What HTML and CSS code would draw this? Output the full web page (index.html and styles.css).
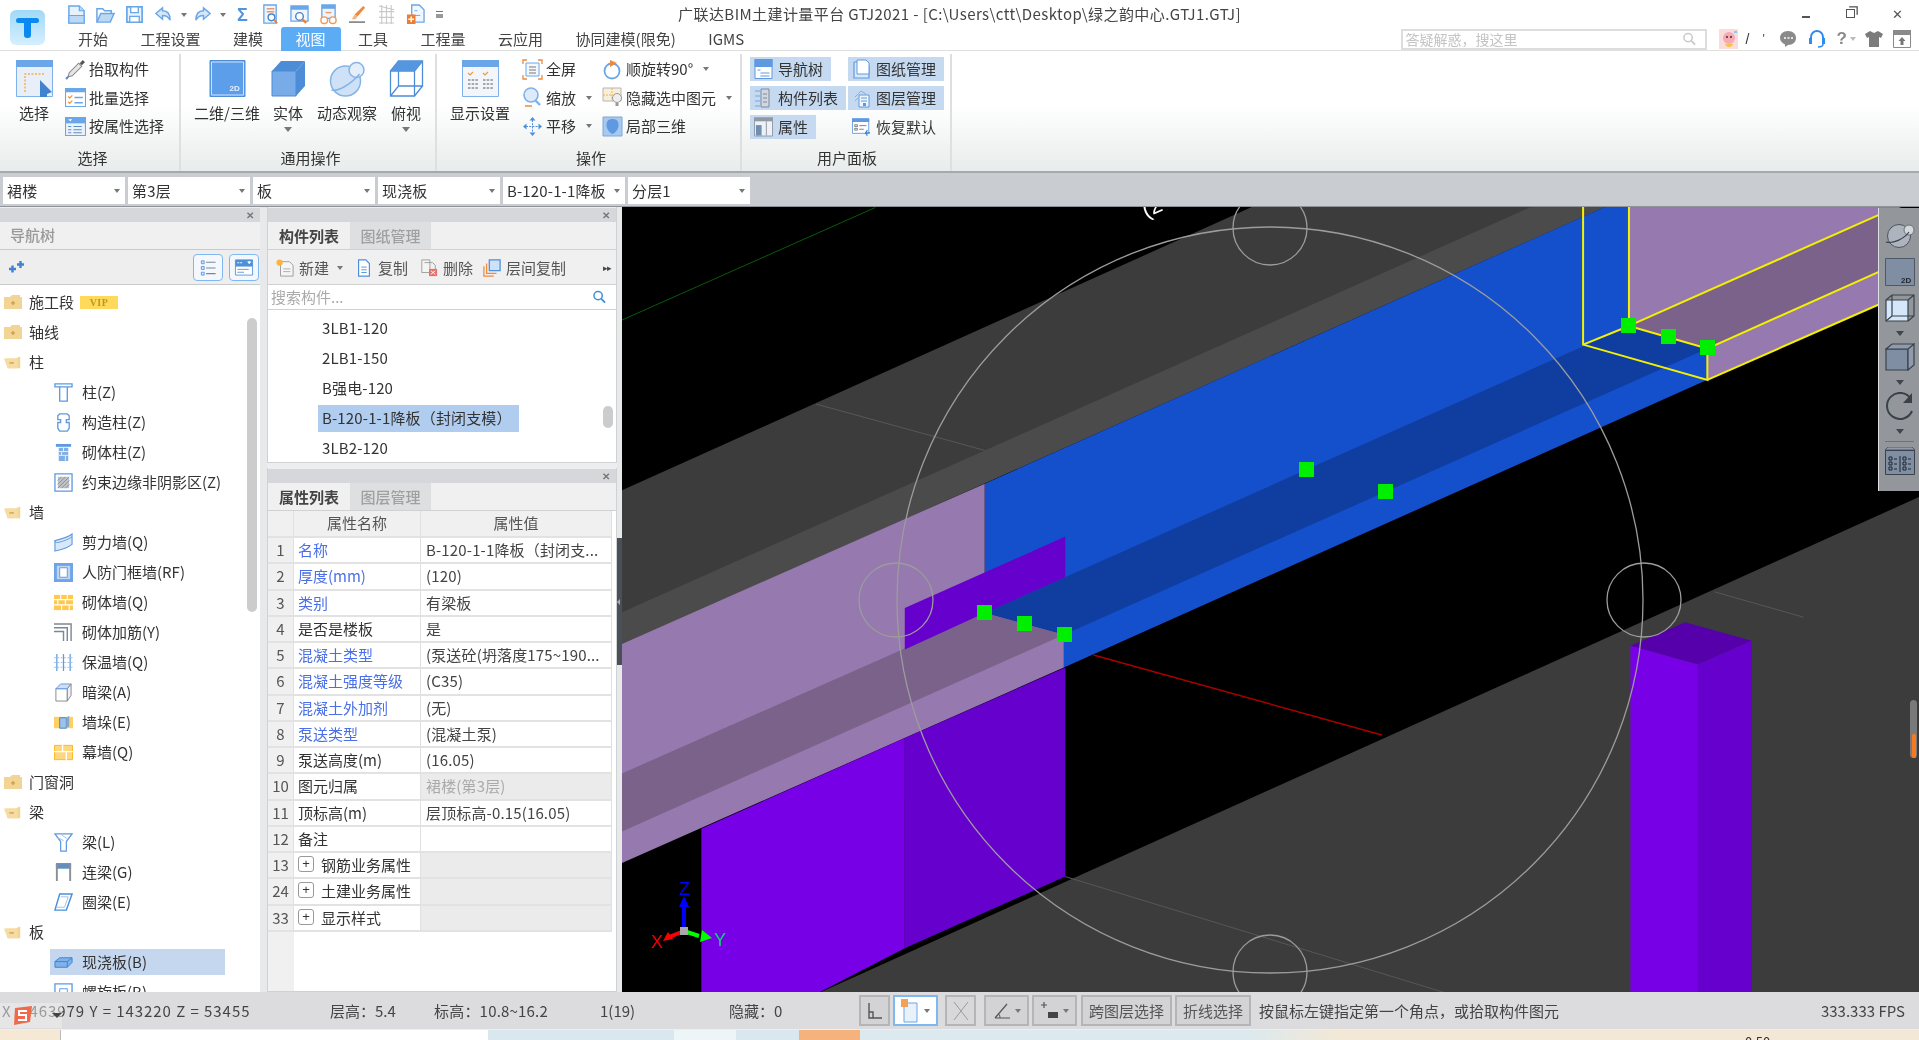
FILE: index.html
```html
<!DOCTYPE html>
<html lang="zh-CN">
<head>
<meta charset="utf-8">
<title>广联达BIM土建计量平台 GTJ2021</title>
<link rel="stylesheet" href="styles.css">
</head>
<body>
<svg class="defs" aria-hidden="true">
  <symbol id="q-doc" viewBox="0 0 20 20"><path d="M2 1h11l5 5v13H2z" fill="#e8f2fc" stroke="#6aa7e8" stroke-width="1.6"/><path d="M13 1v5h5M2 11h16v8H2z" fill="#bcd8f5" stroke="#6aa7e8" stroke-width="1.2"/></symbol>
  <symbol id="q-open" viewBox="0 0 20 20"><path d="M1 18V4h6l2 2h7v3" fill="none" stroke="#6aa7e8" stroke-width="1.6"/><path d="M1 18l4-9h14l-4 9z" fill="#bcd8f5" stroke="#6aa7e8" stroke-width="1.5"/></symbol>
  <symbol id="q-save" viewBox="0 0 20 20"><path d="M2 2h16v16H2z" fill="#e8f2fc" stroke="#6aa7e8" stroke-width="1.8"/><path d="M6 2h8v6H6zM5 12h10v6H5z" fill="#fff" stroke="#6aa7e8" stroke-width="1.4"/></symbol>
  <symbol id="q-undo" viewBox="0 0 20 20"><path d="M9 3L2 9l7 6v-4c4 0 6 1 8 5 0-7-3-10-8-10z" fill="#d5e7f9" stroke="#6aa7e8" stroke-width="1.5"/></symbol>
  <symbol id="q-redo" viewBox="0 0 20 20"><path d="M11 3l7 6-7 6v-4c-4 0-6 1-8 5 0-7 3-10 8-10z" fill="#d5e7f9" stroke="#6aa7e8" stroke-width="1.5"/></symbol>
  <symbol id="q-find1" viewBox="0 0 20 22"><path d="M3 1h13v19H3z" fill="#eef5fc" stroke="#6aa7e8" stroke-width="1.4"/><path d="M6 5h8M6 8h8" stroke="#e89a6a" stroke-width="1.6"/><circle cx="11" cy="14" r="3.5" fill="#fff" stroke="#4b84c4" stroke-width="1.5"/><path d="M14 17l3 3" stroke="#ef7d31" stroke-width="2"/></symbol>
  <symbol id="q-find2" viewBox="0 0 20 22"><path d="M1 2h18v16H1z" fill="#eef5fc" stroke="#6aa7e8" stroke-width="1.4"/><path d="M1 2h18v4H1z" fill="#6aa7e8"/><circle cx="10" cy="13" r="4" fill="#fff" stroke="#4b84c4" stroke-width="1.5"/><path d="M13 16l4 4" stroke="#ef7d31" stroke-width="2.2"/></symbol>
  <symbol id="q-glass" viewBox="0 0 20 22"><path d="M3 1h14v14H3z" fill="#eef5fc" stroke="#6aa7e8" stroke-width="1.4"/><path d="M3 1h14v4H3z" fill="#6aa7e8"/><path d="M7 9h6" stroke="#e89a6a" stroke-width="1.5"/><circle cx="5.5" cy="17" r="3.5" fill="#fff" stroke="#ef9a5c" stroke-width="1.5"/><circle cx="14.5" cy="17" r="3.5" fill="#fff" stroke="#ef9a5c" stroke-width="1.5"/></symbol>
  <symbol id="q-brush" viewBox="0 0 20 22"><path d="M16 2l2 2-8 9-3-2z" fill="#ef8a3c"/><path d="M7 11l3 2-2 3-4 0z" fill="#f4b27c"/><path d="M1 19h17" stroke="#777" stroke-width="1.6"/></symbol>
  <symbol id="q-grid" viewBox="0 0 20 22"><path d="M2 2l16 4M2 8h16M2 14h16M2 20h16M5 1v20M10 1v20M15 1v20" stroke="#c9c9c9" stroke-width="1.2" fill="none"/></symbol>
  <symbol id="q-plus" viewBox="0 0 20 22"><path d="M6 1h8l5 5v13H6z" fill="#f2f7fd" stroke="#6aa7e8" stroke-width="1.4"/><path d="M9 7h3M9 12h6" stroke="#6aa7e8"/><path d="M1 11h9v10H1z" fill="#ef7d31"/><path d="M5.5 13v6M2.5 16h6" stroke="#fff" stroke-width="1.6"/></symbol>

  <symbol id="r-select" viewBox="0 0 37 37"><path d="M.5.5h36v36H.5z" fill="#e9eff8" stroke="#7fb2ea"/><path d="M0 0h37v7H0z" fill="#6aa6e8"/><path d="M9 32V14h20" fill="none" stroke="#efb14f" stroke-width="1.4" stroke-dasharray="2 1.5"/><path d="M24 20l12 12-5 2v3H24z" fill="#3f82cf"/></symbol>
  <symbol id="r-pick" viewBox="0 0 20 20"><path d="M17 1l2 2-3 3-2-2z" fill="#555"/><path d="M13 4l3 3-9 9-4 1 1-4z" fill="#e6e6e6" stroke="#888"/><path d="M3 17l-2 2" stroke="#4b90d8" stroke-width="2"/></symbol>
  <symbol id="r-batch" viewBox="0 0 20 20"><path d="M.5 1.5h19v17H.5z" fill="#fff" stroke="#6aa7e8"/><path d="M0 1h20v4H0z" fill="#6aa7e8"/><path d="M3 9l1.5 1.5L7 8M3 14l1.5 1.5L7 13" fill="none" stroke="#ef9a3c" stroke-width="1.2"/><path d="M9 10h8M9 15h8" stroke="#6aa7e8" stroke-width="1.2"/></symbol>
  <symbol id="r-attr" viewBox="0 0 20 20"><path d="M.5 1.5h19v17H.5z" fill="#eaf2fb" stroke="#6aa7e8"/><path d="M0 1h20v6H0z" fill="#6aa7e8"/><path d="M3 3h4L5 5z" fill="#fff"/><path d="M8 10h8M8 13h8M8 16h8M3 10h3M3 13h3M3 16h3" stroke="#5f8fc4"/></symbol>
  <symbol id="r-solid" viewBox="0 0 35 37"><path d="M1 11h24v25H1z" fill="#78ace9" stroke="#4d8cd6"/><path d="M1 11l9-10h24l-9 10z" fill="#4d8cd6"/><path d="M25 11l9-10v25l-9 10z" fill="#4d8cd6"/></symbol>
  <symbol id="r-orbit" viewBox="0 0 36 37"><circle cx="16" cy="21" r="15" fill="#cfe1f6" stroke="#87b4e6" stroke-width="1.5"/><circle cx="27" cy="10" r="7.5" fill="#e4effb" stroke="#87b4e6" stroke-width="1.5"/><path d="M2 30C8 32 22 24 30 14" fill="none" stroke="#87b4e6" stroke-width="1.5"/></symbol>
  <symbol id="r-top" viewBox="0 0 34 37"><path d="M1 11h24v25H1zM9 1h24v25H9zM1 11l8-10M25 11l8-10M25 36l8-10M1 36l8-10" fill="none" stroke="#4d8cd6" stroke-width="1.3"/><path d="M1 11l8-10h24l-8 10z" fill="#5596e0"/></symbol>
  <symbol id="r-disp" viewBox="0 0 37 37"><path d="M.5.5h36v36H.5z" fill="#f2f6fb" stroke="#7fb2ea"/><path d="M0 0h37v7H0z" fill="#6aa6e8"/><path d="M6 13l2 2 3-3M21 13l2 2 3-3" fill="none" stroke="#ef9a3c" stroke-width="1.2"/><path d="M6 20h11M6 24h11M6 28h11M21 20h11M21 24h11M21 28h11" stroke="#8a8f96" stroke-width="1.4" stroke-dasharray="2.5 1.2"/></symbol>
  <symbol id="r-full" viewBox="0 0 21 21"><path d="M4 4h13v13H4z" fill="#f4f8fd" stroke="#6aa7e8"/><path d="M7 8h7M7 11h7M7 14h7" stroke="#777"/><path d="M1 5V1h4M16 1h4v4M20 16v4h-4M5 20H1v-4" fill="none" stroke="#ef8a3c" stroke-width="1.3"/></symbol>
  <symbol id="r-rot" viewBox="0 0 21 21"><circle cx="10" cy="12" r="7.5" fill="none" stroke="#6aa7e8" stroke-width="1.8"/><path d="M8 1l7 3-7 4z" fill="#ef8a3c"/></symbol>
  <symbol id="r-zoom" viewBox="0 0 21 21"><circle cx="9" cy="8" r="7" fill="#ddeafa" stroke="#7fb2ea" stroke-width="1.6"/><path d="M13 13l5 5" stroke="#7fb2ea" stroke-width="2.4"/><path d="M3 19h7" stroke="#ef7d31" stroke-width="1.4"/></symbol>
  <symbol id="r-hide" viewBox="0 0 21 21"><path d="M1 1h18v13H1z" fill="#f7efd9" stroke="#b6b6b6"/><path d="M10 1v13M1 8h9" stroke="#efb14f" stroke-dasharray="2 1"/><circle cx="15" cy="11" r="4.5" fill="#eee" stroke="#999"/><path d="M13.5 16h3v3h-3z" fill="#999"/></symbol>
  <symbol id="r-pan" viewBox="0 0 21 21"><path d="M10.5 1l3 3.5h-6zM10.5 20l3-3.5h-6zM1 10.5l3.5-3v6zM20 10.5l-3.5-3v6z" fill="#4b90d8"/><path d="M10.5 4v13M4 10.5h13" stroke="#4b90d8" stroke-width="1" stroke-dasharray="2 1.2"/></symbol>
  <symbol id="r-local" viewBox="0 0 21 21"><path d="M1 1h19v19H1z" fill="#a7c9ef" stroke="#7fa8d6"/><path d="M10.5 3c4 0 6 2 6 6s-3 8-6 9c-3-1-6-5-6-9s2-6 6-6z" fill="#5f9ae0"/></symbol>
  <symbol id="r-nav" viewBox="0 0 18 20"><path d="M.5.5h17v19H.5z" fill="#fff" stroke="#5f9ae0"/><path d="M0 0h18v8H0z" fill="#5f9ae0"/><path d="M3 11h3M6 14h9M6 17h9" stroke="#5f9ae0"/></symbol>
  <symbol id="r-draw" viewBox="0 0 19 20"><path d="M2 3h3M2 3v16h15V7L13 3h-3" fill="#d9e8f8" stroke="#5f9ae0" stroke-width="1.2"/><path d="M5 1h9l3 3v11H5z" fill="#fff" stroke="#5f9ae0"/></symbol>
  <symbol id="r-list" viewBox="0 0 19 20"><path d="M7 1h8v18H7z" fill="#cfd7e2" stroke="#7f8894"/><path d="M9 6h4M9 10h4M9 14h4" stroke="#7f8894"/><path d="M1 3h5M1 8h5M1 13h5M1 18h5" stroke="#6aa7e8"/></symbol>
  <symbol id="r-layer" viewBox="0 0 19 20"><path d="M3 9l6-6 5 3M3 13l3-3" fill="none" stroke="#aaa"/><path d="M7 7h10v12H7z" fill="#eef5fc" stroke="#5f9ae0"/><path d="M9 10h6M9 13h6" stroke="#5f9ae0"/><path d="M11 15h3v3h-3z" fill="#5f9ae0"/></symbol>
  <symbol id="r-prop" viewBox="0 0 20 20"><path d="M.5.5h19v19H.5z" fill="#eef1f5" stroke="#8f98a3"/><path d="M0 0h20v4H0z" fill="#8f98a3"/><path d="M2 8h6v11H2z" fill="#6f8eb0"/><path d="M13 4v15" stroke="#8f98a3"/></symbol>
  <symbol id="r-rest" viewBox="0 0 21 21"><path d="M.5 1.5h18v16H.5z" fill="#fff" stroke="#5f9ae0"/><path d="M0 1h19v4H0z" fill="#5f9ae0"/><path d="M3 8h3v2H3zM3 12h3v2H3z" fill="none" stroke="#777"/><path d="M8 9h8M8 13h5" stroke="#777"/><path d="M20 17h-5l2-3M15 17l2 3" fill="none" stroke="#3f82cf" stroke-width="1.3"/></symbol>

  <symbol id="f-plus" viewBox="0 0 18 16"><path d="M0 3h6l2-2h8v2h2v12H0z" fill="#f2d594"/><path d="M7 9h4M9 7v4" stroke="#cfa552" stroke-width="1.6"/></symbol>
  <symbol id="f-minus" viewBox="0 0 20 16"><path d="M2 4h11l5-2v13H4z" fill="#f2d594"/><path d="M0 4h13l5-2-3 3v10H4z" fill="#f5dca4"/><path d="M6 9h5" stroke="#cfa552" stroke-width="1.6"/></symbol>
  <symbol id="t-col" viewBox="0 0 20 20"><path d="M1 1h18v3H1zM6 4h8v15H6z" fill="#fff" stroke="#5f9ae0" stroke-width="1.4"/></symbol>
  <symbol id="t-struct" viewBox="0 0 20 20"><path d="M6 1h8l2 2v4h-3v3h3v6l-2 3H6l-2-3v-6h3V7H4V3z" fill="#fff" stroke="#5f9ae0" stroke-width="1.4"/></symbol>
  <symbol id="t-brick" viewBox="0 0 20 20"><path d="M2 1h16v3H2z" fill="#5f9ae0"/><path d="M5 5h10v14H5z" fill="#7faee6"/><path d="M5 9h10M5 13h10M10 5v4M8 9v4M12 13v6" stroke="#e9f1fb"/></symbol>
  <symbol id="t-limit" viewBox="0 0 20 20"><path d="M1 1h18v18H1z" fill="#fff" stroke="#5f9ae0" stroke-width="1.4"/><path d="M4 4h12v12H4z" fill="#bfc3c8"/><path d="M4 8l4-4M4 12l8-8M4 16l12-12M8 16l8-8M12 16l4-4" stroke="#8a8f96"/></symbol>
  <symbol id="t-shear" viewBox="0 0 20 20"><path d="M1 8C5 7 14 5 19 1v11c-5 4-13 6-18 7z" fill="#d9e8f8" stroke="#5f9ae0" stroke-width="1.2"/><path d="M1 8c0 2 1 2 3 2 5-1 11-3 15-6" fill="none" stroke="#5f9ae0"/></symbol>
  <symbol id="t-rf" viewBox="0 0 20 20"><path d="M0 0h20v20H0z" fill="#6fa4e6"/><path d="M3 3h14v14H3z" fill="#bcd6f3"/><path d="M6 5h8v10H6z" fill="#fff" stroke="#5f9ae0"/></symbol>
  <symbol id="t-wall" viewBox="0 0 20 16"><path d="M0 0h20v16H0z" fill="#ffc94f"/><path d="M0 5h20M0 10.500h20M7 0v5M14 0v5M4 5v5M12 5v5M8 10v6M16 10v6" stroke="#fff" stroke-width="1.2"/></symbol>
  <symbol id="t-rebar" viewBox="0 0 20 20"><path d="M0 1h18v18M0 5h14v14M0 9h10v10" fill="none" stroke="#7d8894" stroke-width="1.5"/></symbol>
  <symbol id="t-insul" viewBox="0 0 20 20"><path d="M3 1v18M10 1v18M17 1v18" stroke="#5f9ae0" stroke-width="1.3"/><path d="M0 5h20M0 10h20M0 15h20" stroke="#9cc1ec" stroke-width="1" stroke-dasharray="2 1.5"/></symbol>
  <symbol id="t-hid" viewBox="0 0 20 20"><path d="M2 6h12v13H2z" fill="#fff" stroke="#888"/><path d="M2 6l5-5h11l-4 5z" fill="#cfe0f5" stroke="#5f9ae0"/><path d="M14 6l4-5v12l-4 6z" fill="#eef" stroke="#888"/></symbol>
  <symbol id="t-pier" viewBox="0 0 20 16"><path d="M0 2h20v12H0z" fill="#ffcf60"/><path d="M6 3h7v11H6z" fill="#9cc1ec" stroke="#4b84c4"/><path d="M13 3l3-2v11l-3 2z" fill="#7fa8d6"/></symbol>
  <symbol id="t-curtain" viewBox="0 0 20 16"><path d="M.5.5h19v15H.5z" fill="#ffd77f" stroke="#ffb71c"/><path d="M0 7h20M9 0v7M13 7v9" stroke="#fff" stroke-width="1.4"/></symbol>
  <symbol id="t-beam" viewBox="0 0 20 20"><path d="M1 1h18l-6 8v10H7V9z" fill="#fff" stroke="#5f9ae0" stroke-width="1.3"/><path d="M4 5l6 3M8 2l6 4" stroke="#9cc1ec"/></symbol>
  <symbol id="t-lintel" viewBox="0 0 20 20"><path d="M2 1h16v5H2z" fill="#5f8fc4"/><path d="M2 1h2v18H2zM16 1h2v18h-2z" fill="#8a8f96"/><path d="M2 0h16v1.500H2z" fill="#8a8f96"/></symbol>
  <symbol id="t-ring" viewBox="0 0 20 20"><path d="M6 1h13l-6 17H1z" fill="#fff" stroke="#4b90d8" stroke-width="1.5"/><path d="M7 4h8l-4 11H3" fill="none" stroke="#9cc1ec"/></symbol>
  <symbol id="t-slab" viewBox="0 0 20 12"><path d="M1 5l5-4h13v5l-5 5H1z" fill="#7fb2ea" stroke="#3f82cf"/><path d="M1 5h13l5-4M14 5v6" fill="none" stroke="#3f82cf"/></symbol>
  <symbol id="t-spiral" viewBox="0 0 20 20"><path d="M1 1h18v18H1z" fill="#fff" stroke="#5f9ae0" stroke-width="1.4"/><path d="M6 6h8v8H6z" fill="none" stroke="#5f9ae0"/></symbol>

  <symbol id="p-new" viewBox="0 0 20 20"><path d="M5 3h10l4 4v12H5z" fill="#f5f5f5" stroke="#999"/><path d="M8 11h8M8 14h8" stroke="#aaa"/><circle cx="4" cy="4" r="3.500" fill="#ffb13b"/></symbol>
  <symbol id="p-copy" viewBox="0 0 20 20"><path d="M4 1h8l4 4v14H4z" fill="#fff" stroke="#4b90d8" stroke-width="1.3"/><path d="M7 9h6M7 12h6M7 15h6" stroke="#4b90d8"/></symbol>
  <symbol id="p-del" viewBox="0 0 20 20"><path d="M2 1h9v14H2z" fill="#f4f4f4" stroke="#999"/><path d="M5 4h9l3 3v5" fill="none" stroke="#999"/><path d="M10 11h9v8h-9z" fill="#e8706a"/><path d="M12 13l5 4M17 13l-5 4" stroke="#fff"/></symbol>
  <symbol id="p-floor" viewBox="0 0 20 20"><path d="M1 8v11h11M4 5v11h11" fill="none" stroke="#ef8a3c" stroke-width="1.4"/><path d="M7 1h12v12H7z" fill="#cfe0f7" stroke="#4b90d8" stroke-width="1.4"/></symbol>
  <symbol id="s-mag" viewBox="0 0 14 14"><circle cx="5.500" cy="5.500" r="4.500" fill="none" stroke="currentColor" stroke-width="1.6"/><path d="M9 9l4 4" stroke="currentColor" stroke-width="2"/></symbol>

  <symbol id="b-angle" viewBox="0 0 20 20"><path d="M4 2v15h13M4 11h4v6" fill="none" stroke="#555" stroke-width="1.4"/></symbol>
  <symbol id="b-rect" viewBox="0 0 20 24"><path d="M3 4h13v19H3z" fill="#e9f2fb" stroke="#6aa7e8"/><path d="M0 0h7v8H0z" fill="#f5a05a"/></symbol>
  <symbol id="b-x" viewBox="0 0 20 20"><path d="M3 1l14 18M17 1L3 19" stroke="#9a9a9a"/></symbol>
  <symbol id="b-ang" viewBox="0 0 20 20"><path d="M3 17h15M3 17L15 3" stroke="#555" stroke-width="1.2"/><path d="M8 17c0-3-1-4-2-4" stroke="#555" fill="none"/></symbol>
  <symbol id="b-plus" viewBox="0 0 20 20"><path d="M1 4h6M4 1v6" stroke="#555" stroke-width="1.2"/><path d="M8 11h10v6H8z" fill="#444"/></symbol>

  <symbol id="v-orbit" viewBox="0 0 30 26"><circle cx="14" cy="14" r="11.500" fill="#aeb4bd" stroke="#4b535d"/><circle cx="24" cy="8" r="5" fill="#d4d8dd" stroke="#6a727c"/><path d="M1 20c7 2 18-3 23-10" fill="none" stroke="#39414b" stroke-width="1.2"/></symbol>
  <symbol id="v-wire" viewBox="0 0 30 28"><path d="M1 6h22v21H1z" fill="#d5e8fb" stroke="#39414b" stroke-width="1.2"/><path d="M1 6l6-5h22v21l-6 5M23 6l6-5M7 1v21h22M1 27l6-5" fill="none" stroke="#39414b" stroke-width="1.2"/></symbol>
  <symbol id="v-cube" viewBox="0 0 30 28"><path d="M1 6h22v21H1z" fill="#7f8ea3" stroke="#39414b" stroke-width="1.2"/><path d="M1 6l6-5h22l-6 5zM23 6l6-5v21l-6 5z" fill="#8f9bac" stroke="#39414b" stroke-width="1.2"/></symbol>
  <symbol id="v-rot" viewBox="0 0 30 28"><path d="M26 7a13 13 0 1 0 1 12" fill="none" stroke="#39414b" stroke-width="2"/><path d="M27 1v10H18z" fill="#39414b"/></symbol>
  <symbol id="v-table" viewBox="0 0 30 28"><path d="M.5 3.500h29v24H.5z" fill="#7f8ea3" stroke="#39414b"/><path d="M0 3l3-3h24l3 3z" fill="#8f9bac" stroke="#39414b" stroke-width=".7"/><path d="M15 9v16M4 10h3v3H4zM4 15h3v3H4zM4 20h3v3H4zM18 10h3v3h-3zM18 15h3v3h-3zM18 20h3v3h-3zM9 12h3M9 17h3M9 22h3M23 12h3M23 17h3M23 22h3" fill="none" stroke="#20262e"/></symbol>
</svg>

<div class="app">
  <header class="top">
    <div class="logo"><span class="logo-t"></span></div>
    <div class="title-row">
      <div class="qat">
        <svg class="qi"><use href="#q-doc"/></svg>
        <svg class="qi"><use href="#q-open"/></svg>
        <svg class="qi"><use href="#q-save"/></svg>
        <svg class="qi"><use href="#q-undo"/></svg><span class="tri q-tri"></span>
        <svg class="qi"><use href="#q-redo"/></svg><span class="tri q-tri"></span>
        <span class="sigma">Σ</span>
        <svg class="qi"><use href="#q-find1"/></svg>
        <svg class="qi"><use href="#q-find2"/></svg>
        <svg class="qi"><use href="#q-glass"/></svg>
        <svg class="qi"><use href="#q-brush"/></svg>
        <svg class="qi"><use href="#q-grid"/></svg>
        <svg class="qi"><use href="#q-plus"/></svg>
        <span class="q-more"></span>
      </div>
      <div class="title">广联达BIM土建计量平台 GTJ2021 - [C:\Users\ctt\Desktop\绿之韵中心.GTJ1.GTJ]</div>
      <div class="win">
        <span class="win-min"></span>
        <span class="win-rest"></span>
        <span class="win-close">✕</span>
      </div>
    </div>
    <div class="tab-row">
      <nav class="tabs">
        <span class="tab">开始</span><span class="tab">工程设置</span><span class="tab">建模</span><span class="tab active">视图</span><span class="tab">工具</span><span class="tab">工程量</span><span class="tab">云应用</span><span class="tab">协同建模(限免)</span><span class="tab">IGMS</span>
      </nav>
      <div class="tools">
        <div class="search"><span>答疑解惑，搜这里</span><svg class="search-ic"><use href="#s-mag"/></svg></div>
        <svg class="avatar" viewBox="0 0 19 20"><path d="M0 0h19v20H0z" fill="#fbdcdc"/><circle cx="10" cy="9" r="6" fill="#f7a9b4"/><path d="M6 15c1 4 7 4 8 0z" fill="#f3c445"/><circle cx="8" cy="8" r="1" fill="#333"/><circle cx="12" cy="8" r="1" fill="#333"/><path d="M15 2h3v2h-3z" fill="#8fc5ef"/></svg>
        <span class="slash">/</span>
        <span class="tick">'</span>
        <svg class="tool-ic chat" viewBox="0 0 18 18"><path d="M9 1c5 0 8 3 8 7s-3 7-8 7l-3 2v-2.500C3 13 1 11 1 8c0-4 3-7 8-7z" fill="#8a8a8a"/><path d="M5 8h2M8.500 8h2M12 8h2" stroke="#fff" stroke-width="1.400"/></svg>
        <svg class="tool-ic head" viewBox="0 0 18 20"><path d="M3 11V8a6 6 0 0 1 12 0v3" fill="none" stroke="#2f8bf0" stroke-width="2"/><path d="M1 9h3v6H1zM14 9h3v6h-3z" fill="#2f8bf0"/><path d="M15 15c0 2-2 3-5 3" fill="none" stroke="#2f8bf0" stroke-width="1.500"/></svg>
        <span class="help">?</span><span class="tri help-tri"></span>
        <svg class="tool-ic shirt" viewBox="0 0 18 18"><path d="M5 1l4 2 4-2 5 3-2 4-2-1v10H4V7L2 8 0 4z" fill="#7b7b7b"/></svg>
        <svg class="tool-ic box" viewBox="0 0 18 18"><path d="M.5.5h17v17H.5z" fill="#fff" stroke="#8a8a8a"/><path d="M0 0h18v5H0z" fill="#8a8a8a"/><path d="M9 7l3.500 4H10.500v4h-3v-4H5.500z" fill="#777"/></svg>
      </div>
    </div>
  </header>

  <section class="ribbon">
    <div class="group g-sel">
      <div class="g-body">
        <div class="big b-sel"><svg class="big-ic"><use href="#r-select"/></svg><span>选择</span></div>
        <div class="col">
          <div class="sm"><svg class="sm-ic"><use href="#r-pick"/></svg><span>抬取构件</span></div>
          <div class="sm"><svg class="sm-ic"><use href="#r-batch"/></svg><span>批量选择</span></div>
          <div class="sm"><svg class="sm-ic"><use href="#r-attr"/></svg><span>按属性选择</span></div>
        </div>
      </div>
      <div class="g-label">选择</div>
    </div>
    <div class="group g-common">
      <div class="g-body">
        <div class="big b-2d"><svg class="big-ic" viewBox="0 0 36 37"><path d="M.5.5h35v36H.5z" fill="#5fa0ea" stroke="#4d8cd6"/><path d="M2 2h32v33H2z" fill="#5c9eea" stroke="#cfe2f7"/><text class="sym-2d" x="20" y="31">2D</text></svg><span>二维/三维</span></div>
        <div class="big b-solid"><svg class="big-ic"><use href="#r-solid"/></svg><span>实体</span><i class="tri big-tri"></i></div>
        <div class="big b-orbit"><svg class="big-ic"><use href="#r-orbit"/></svg><span>动态观察</span></div>
        <div class="big b-solid"><svg class="big-ic"><use href="#r-top"/></svg><span>俯视</span><i class="tri big-tri"></i></div>
      </div>
      <div class="g-label">通用操作</div>
    </div>
    <div class="group g-ops">
      <div class="g-body">
        <div class="big b-2d"><svg class="big-ic"><use href="#r-disp"/></svg><span>显示设置</span></div>
        <div class="col col-a">
          <div class="sm"><svg class="sm-ic"><use href="#r-full"/></svg><span>全屏</span></div>
          <div class="sm"><svg class="sm-ic"><use href="#r-zoom"/></svg><span>缩放</span><i class="tri"></i></div>
          <div class="sm"><svg class="sm-ic"><use href="#r-pan"/></svg><span>平移</span><i class="tri"></i></div>
        </div>
        <div class="col">
          <div class="sm"><svg class="sm-ic"><use href="#r-rot"/></svg><span>顺旋转90°</span><i class="tri"></i></div>
          <div class="sm"><svg class="sm-ic"><use href="#r-hide"/></svg><span>隐藏选中图元</span><i class="tri"></i></div>
          <div class="sm"><svg class="sm-ic"><use href="#r-local"/></svg><span>局部三维</span></div>
        </div>
      </div>
      <div class="g-label">操作</div>
    </div>
    <div class="group g-user">
      <div class="user-grid">
        <div class="pill on"><svg class="pill-ic"><use href="#r-nav"/></svg><span>导航树</span></div>
        <div class="pill on"><svg class="pill-ic"><use href="#r-draw"/></svg><span>图纸管理</span></div>
        <div class="pill on"><svg class="pill-ic"><use href="#r-list"/></svg><span>构件列表</span></div>
        <div class="pill on"><svg class="pill-ic"><use href="#r-layer"/></svg><span>图层管理</span></div>
        <div class="pill on"><svg class="pill-ic"><use href="#r-prop"/></svg><span>属性</span></div>
        <div class="pill"><svg class="pill-ic"><use href="#r-rest"/></svg><span>恢复默认</span></div>
      </div>
      <div class="g-label">用户面板</div>
    </div>
  </section>

  <section class="combos">
    <div class="combo"><span>裙楼</span><i class="tri"></i></div>
    <div class="combo"><span>第3层</span><i class="tri"></i></div>
    <div class="combo"><span>板</span><i class="tri"></i></div>
    <div class="combo"><span>现浇板</span><i class="tri"></i></div>
    <div class="combo"><span>B-120-1-1降板</span><i class="tri"></i></div>
    <div class="combo"><span>分层1</span><i class="tri"></i></div>
  </section>

  <main class="main">
    <aside class="nav">
      <div class="dock-head"><span class="dock-x">✕</span></div>
      <div class="nav-title">导航树</div>
      <div class="nav-tools">
        <svg class="nav-add" viewBox="0 0 16 12"><path d="M0 8h7M3.500 4.500v7M8 3.500h7M11.500 0v7" stroke="#3f82cf" stroke-width="2.400"/></svg>
        <span class="nav-btn"><svg viewBox="0 0 20 20"><path d="M3 3h3v3H3zM3 9h3v3H3zM3 15h3v3H3z" fill="#d9e8f8" stroke="#5f9ae0"/><path d="M8 4.500h10M8 10.500h10M8 16.500h10" stroke="#7b8794" stroke-width="1.200"/></svg></span>
        <span class="nav-btn"><svg viewBox="0 0 20 20"><path d="M1 2h18v16H1z" fill="#fff" stroke="#5f9ae0"/><path d="M1 2h18v7H1z" fill="#4b90d8"/><path d="M3 5h2M6 5h2M14 4h3l-1.500 2z" stroke="#fff" fill="#fff"/><path d="M3 12h12M3 15h7" stroke="#5f9ae0"/></svg></span>
      </div>
      <div class="tree">
        <div class="scroll nav-scroll"></div>
        <div class="f"><svg class="f-ic"><use href="#f-plus"/></svg><span>施工段</span><span class="vip">VIP</span></div>
        <div class="f"><svg class="f-ic"><use href="#f-plus"/></svg><span>轴线</span></div>
        <div class="f"><svg class="f-ic"><use href="#f-minus"/></svg><span>柱</span></div>
        <div class="c"><svg class="c-ic"><use href="#t-col"/></svg><span>柱(Z)</span></div>
        <div class="c"><svg class="c-ic"><use href="#t-struct"/></svg><span>构造柱(Z)</span></div>
        <div class="c"><svg class="c-ic"><use href="#t-brick"/></svg><span>砌体柱(Z)</span></div>
        <div class="c"><svg class="c-ic"><use href="#t-limit"/></svg><span>约束边缘非阴影区(Z)</span></div>
        <div class="f"><svg class="f-ic"><use href="#f-minus"/></svg><span>墙</span></div>
        <div class="c"><svg class="c-ic"><use href="#t-shear"/></svg><span>剪力墙(Q)</span></div>
        <div class="c"><svg class="c-ic"><use href="#t-rf"/></svg><span>人防门框墙(RF)</span></div>
        <div class="c"><svg class="c-ic"><use href="#t-wall"/></svg><span>砌体墙(Q)</span></div>
        <div class="c"><svg class="c-ic"><use href="#t-rebar"/></svg><span>砌体加筋(Y)</span></div>
        <div class="c"><svg class="c-ic"><use href="#t-insul"/></svg><span>保温墙(Q)</span></div>
        <div class="c"><svg class="c-ic"><use href="#t-hid"/></svg><span>暗梁(A)</span></div>
        <div class="c"><svg class="c-ic"><use href="#t-pier"/></svg><span>墙垛(E)</span></div>
        <div class="c"><svg class="c-ic"><use href="#t-curtain"/></svg><span>幕墙(Q)</span></div>
        <div class="f"><svg class="f-ic"><use href="#f-plus"/></svg><span>门窗洞</span></div>
        <div class="f"><svg class="f-ic"><use href="#f-minus"/></svg><span>梁</span></div>
        <div class="c"><svg class="c-ic"><use href="#t-beam"/></svg><span>梁(L)</span></div>
        <div class="c"><svg class="c-ic"><use href="#t-lintel"/></svg><span>连梁(G)</span></div>
        <div class="c"><svg class="c-ic"><use href="#t-ring"/></svg><span>圈梁(E)</span></div>
        <div class="f"><svg class="f-ic"><use href="#f-minus"/></svg><span>板</span></div>
        <div class="c sel"><svg class="c-ic"><use href="#t-slab"/></svg><span>现浇板(B)</span></div>
        <div class="c"><svg class="c-ic"><use href="#t-spiral"/></svg><span>螺旋板(B)</span></div>
      </div>
    </aside>

    <div class="gutter"></div>

    <div class="mid">
      <section class="panel p-list">
        <div class="dock-head"><span class="dock-x">✕</span></div>
        <div class="ptabs"><span class="ptab on">构件列表</span><span class="ptab">图纸管理</span></div>
        <div class="ptools">
          <svg class="pt-ic i1"><use href="#p-new"/></svg><span class="pt-t">新建</span><i class="tri pt-tri"></i>
          <svg class="pt-ic i2"><use href="#p-copy"/></svg><span class="pt-t">复制</span>
          <svg class="pt-ic i3"><use href="#p-del"/></svg><span class="pt-t">删除</span>
          <svg class="pt-ic i4"><use href="#p-floor"/></svg><span class="pt-t">层间复制</span>
          <span class="pt-more">▸▸</span>
        </div>
        <div class="psearch"><span>搜索构件...</span><svg class="psearch-ic"><use href="#s-mag"/></svg></div>
        <div class="plist">
          <div class="scroll list-scroll"></div>
          <div class="li"><span>3LB1-120</span></div>
          <div class="li"><span>2LB1-150</span></div>
          <div class="li"><span>B强电-120</span></div>
          <div class="li on"><span>B-120-1-1降板（封闭支模）</span></div>
          <div class="li"><span>3LB2-120</span></div>
        </div>
      </section>

      <section class="panel p-prop">
        <div class="dock-head"><span class="dock-x">✕</span></div>
        <div class="ptabs"><span class="ptab on">属性列表</span><span class="ptab">图层管理</span></div>
        <div class="grid">
          <div class="h"></div><div class="h">属性名称</div><div class="h">属性值</div>
          <div class="n">1</div><div class="k link">名称</div><div class="v">B-120-1-1降板（封闭支...</div>
          <div class="n">2</div><div class="k link">厚度(mm)</div><div class="v">(120)</div>
          <div class="n">3</div><div class="k link">类别</div><div class="v">有梁板</div>
          <div class="n">4</div><div class="k">是否是楼板</div><div class="v">是</div>
          <div class="n">5</div><div class="k link">混凝土类型</div><div class="v">(泵送砼(坍落度175~190...</div>
          <div class="n">6</div><div class="k link">混凝土强度等级</div><div class="v">(C35)</div>
          <div class="n">7</div><div class="k link">混凝土外加剂</div><div class="v">(无)</div>
          <div class="n">8</div><div class="k link">泵送类型</div><div class="v">(混凝土泵)</div>
          <div class="n">9</div><div class="k">泵送高度(m)</div><div class="v">(16.05)</div>
          <div class="n">10</div><div class="k">图元归属</div><div class="v off">裙楼(第3层)</div>
          <div class="n">11</div><div class="k">顶标高(m)</div><div class="v">层顶标高-0.15(16.05)</div>
          <div class="n">12</div><div class="k">备注</div><div class="v"></div>
          <div class="n">13</div><div class="k group-k"><b class="pm">+</b>钢筋业务属性</div><div class="v off"></div>
          <div class="n">24</div><div class="k group-k"><b class="pm">+</b>土建业务属性</div><div class="v off"></div>
          <div class="n">33</div><div class="k group-k"><b class="pm">+</b>显示样式</div><div class="v off"></div>
        </div>
        <div class="filler"><div class="filler-n"></div></div>
      </section>
    </div>

    <div class="splitter"><div class="split-handle"><span></span></div></div>

    <div class="view">
      <svg class="scene" viewBox="622 207 1297 785" preserveAspectRatio="none">
        <rect x="622" y="207" width="1297" height="785" fill="#000"/>
        <g transform="translate(620 200) scale(.7397 .5038)">
          <polygon points="0,578 860,10 1345,5 0,885" fill="#3c3c3c"/>
          <polygon points="0,820 1230,15 1345,5 0,885" fill="#4b4b4b"/>
          <polygon points="260,1580 1760,587 1760,1580" fill="#3c3c3c"/>
          <polygon points="493,563 1345,5 1364,5 1364,250 1470,295 1470,357 600,928 600,863 493,820" fill="#1450cc"/>
          <polygon points="493,820 600,863 1470,295 1364,250" fill="#0f3ea0"/>
          <polygon points="0,883 493,563 493,820 600,863 600,928 0,1318" fill="#9679ae"/>
          <polygon points="0,1140 385,890 493,820 600,863 0,1255" fill="#7a628a"/>
          <polygon points="385,810 602,668 602,749 493,820 385,892" fill="#6600cc"/>
          <polygon points="110,1248 385,1068 385,1485 260,1580 110,1580" fill="#7700e6"/>
          <polygon points="385,1068 602,928 602,1343 385,1485" fill="#6600cc"/>
          <polygon points="1366,885 1440,838 1530,875 1457,922" fill="#5500aa"/>
          <polygon points="1366,885 1457,922 1457,1580 1366,1580" fill="#7700e6"/>
          <polygon points="1457,922 1530,875 1530,1580 1457,1580" fill="#6600cc"/>
          <polygon points="1364,5 1760,5 1760,0 1701,30 1364,250" fill="#9679ae"/>
          <polygon points="1364,250 1701,30 1701,143 1470,295" fill="#7a628a"/>
          <polygon points="1470,295 1701,143 1701,208 1470,357" fill="#9679ae"/>
          <g class="thin faint">
            <line x1="265" y1="405" x2="493" y2="497"/>
            <line x1="602" y1="1343" x2="1130" y2="1580"/>
            <line x1="1480" y1="778" x2="1600" y2="828"/>
          </g>
          <line class="thin" x1="0" y1="240" x2="345" y2="15" stroke="#0a5a0a"/>
          <line class="thin red" x1="640" y1="903" x2="1030" y2="1062"/>
          <g class="yellow">
            <polyline points="1302,5 1302,287 1470,357 1470,295 1364,250 1364,5"/>
            <line x1="1302" y1="287" x2="1364" y2="250"/>
            <line x1="1364" y1="250" x2="1701" y2="30"/>
            <line x1="1470" y1="295" x2="1701" y2="143"/>
            <line x1="1470" y1="357" x2="1701" y2="208"/>
          </g>
        </g>
        <g class="rings">
          <circle cx="1270" cy="600" r="373"/>
          <circle cx="1270" cy="228" r="37"/>
          <circle cx="1270" cy="972" r="37"/>
          <circle cx="896" cy="600" r="37"/>
          <circle cx="1644" cy="600" r="37"/>
        </g>
        <text class="dim" x="1146" y="218" transform="rotate(-24 1146 218)">(2</text>
        <g class="handles">
          <rect x="977" y="605" width="15" height="15"/><rect x="1017" y="616" width="15" height="15"/><rect x="1057" y="627" width="15" height="15"/>
          <rect x="1299" y="462" width="15" height="15"/><rect x="1378" y="484" width="15" height="15"/>
          <rect x="1621" y="318" width="15" height="15"/><rect x="1661" y="329" width="15" height="15"/><rect x="1700" y="340" width="15" height="15"/>
        </g>
        <g class="axis">
          <path d="M684 927V906" stroke="#0000ff" stroke-width="4"/><path d="M684 896l5 11h-10z" fill="#0000ff"/>
          <path d="M684 931l-15 6" stroke="#ff0000" stroke-width="4"/><path d="M663 941l5-9 5 7z" fill="#ff0000"/>
          <path d="M684 931l15 5" stroke="#00ff00" stroke-width="4"/><path d="M712 938l-12 4 2-12z" fill="#00ff00"/>
          <rect x="680" y="927" width="8" height="8" fill="#aaa"/>
          <text class="ax-z" x="679" y="895">Z</text>
          <text class="ax-x" x="651" y="948">X</text>
          <text class="ax-y" x="714" y="946">Y</text>
        </g>
        <rect x="1910" y="700" width="7" height="58" rx="3.500" fill="#7a7a7a"/>
        <rect x="1912" y="734" width="4" height="24" rx="1.500" fill="#f57a20"/>
      </svg>
      <div class="vbar">
        <svg class="vi v1"><use href="#v-orbit"/></svg>
        <svg class="vi" viewBox="0 0 30 28"><path d="M.5.5h29v27H.5z" fill="#7f8ea3" stroke="#4e5966"/><text class="sym-v2d" x="16" y="25">2D</text></svg>
        <svg class="vi"><use href="#v-wire"/></svg><i class="tri v-tri"></i>
        <svg class="vi"><use href="#v-cube"/></svg><i class="tri v-tri"></i>
        <svg class="vi"><use href="#v-rot"/></svg><i class="tri v-tri"></i>
        <hr class="v-sep">
        <svg class="vi"><use href="#v-table"/></svg>
      </div>
    </div>
  </main>

  <footer class="status">
    <span class="st coords">X = 463979 Y = 143220 Z = 53455</span>
    <span class="st s-h">层高：5.4</span>
    <span class="st s-e">标高：10.8~16.2</span>
    <span class="st s-n">1(19)</span>
    <span class="st s-c">隐藏：0</span>
    <div class="sbtns">
      <span class="sb w31"><svg><use href="#b-angle"/></svg></span>
      <span class="sb w45 cur"><svg class="b-rect"><use href="#b-rect"/></svg><i class="tri"></i></span>
      <span class="sb w31 dis"><svg><use href="#b-x"/></svg></span>
      <span class="sb w45 after-x"><svg><use href="#b-ang"/></svg><i class="tri"></i></span>
      <span class="sb w45"><svg><use href="#b-plus"/></svg><i class="tri"></i></span>
      <span class="sb txt w91">跨图层选择</span>
      <span class="sb txt w76">折线选择</span>
    </div>
    <span class="st msg">按鼠标左键指定第一个角点，或拾取构件图元</span>
    <span class="st fps">333.333 FPS</span>
    <div class="ime">
      <svg viewBox="0 0 22 20"><path d="M3 2l17-2-2 16-16 3z" fill="#ef6a4d"/><path d="M15 5H7v4h7v5H6" fill="none" stroke="#fff" stroke-width="2"/></svg>
      <i class="tri ime-tri"></i>
    </div>
  </footer>

  <div class="desk">
    <span class="d1"></span><span class="d2"></span><span class="d3"></span><span class="d4"></span><span class="d3 d5"></span><span class="d6"></span><span class="d7"></span><span class="d-num">0.50</span>
  </div>
</div>
</body>
</html>
```

FILE: styles.css
```css
* { box-sizing: border-box; }
html, body { margin: 0; padding: 0; background: #fff; }
body { width: 1919px; height: 1040px; overflow: hidden; font: 15px/20px "Noto Sans CJK SC", "Noto Sans", sans-serif; color: #333; }
.defs { position: absolute; width: 0; height: 0; overflow: hidden; }
.app { position: relative; width: 1919px; height: 1040px; display: flex; flex-direction: column; overflow: hidden; filter: blur(.35px); }
svg { display: block; }
i { font-style: normal; }
.tri { display: inline-block; width: 0; height: 0; border: 3.5px solid transparent; border-top: 4px solid #777; border-bottom: 0; flex: none; }
.sym-2d { fill: #e6f0fb; font: 700 8px "Liberation Sans", sans-serif; }
.sym-v2d { fill: #20262e; font: 700 8px "Liberation Sans", sans-serif; }

/* title + tabs */
.top { position: relative; height: 51px; flex: none; background: #fff; border-bottom: 1px solid #dfe1e1; }
.logo { position: absolute; left: 10px; top: 10px; width: 35px; height: 35px; border-radius: 6px; background: linear-gradient(#9fd9f7, #d6efff); display: flex; justify-content: center; z-index: 1; }
.logo-t { position: relative; width: 23px; height: 5px; margin-top: 8px; background: #0a8af0; border-radius: 3px; }
.logo-t::after { content: ""; position: absolute; left: 8px; top: 0; width: 7px; height: 20px; border-radius: 3px; background: #0a8af0; }
.title-row { height: 27px; display: grid; grid-template-columns: 1fr auto 1fr; align-items: center; }
.qat { display: flex; align-items: center; padding: 2px 0 0 67px; }
.qi { width: 19px; height: 21px; flex: none; margin-right: 10px; }
.q-tri { margin: 0 6px 0 -2px; }
.sigma { color: #4f94dc; font: 700 18px/20px "Liberation Sans", sans-serif; width: 24px; text-align: left; margin: 0 0 0 5px; }
.q-more { width: 7px; height: 7px; border-top: 1px solid #777; border-bottom: 4px solid #999; margin-left: 1px; }
.title { font-size: 15px; color: #444; white-space: nowrap; letter-spacing: .42px; }
.win { justify-self: end; display: flex; align-items: center; height: 24px; padding-right: 16px; }
.win-min { width: 8px; height: 2px; margin: 6px 36px 0 0; background: #555; }
.win-rest { width: 9px; height: 9px; border: 1.500px solid #555; margin-right: 37px; box-shadow: 2px -2px 0 -.5px #fff, 3px -3px 0 -.2px #555; }
.win-close { font-size: 13px; color: #555; line-height: 14px; }
.tab-row { height: 24px; display: flex; justify-content: space-between; }
.tabs { display: flex; gap: 2.500px; padding-left: 63px; }
.tab { padding: 0 15px; line-height: 24px; color: #444; }
.tab.active { background: #5cabf5; color: #fff; border-radius: 3px 3px 0 0; }
.tools { display: flex; align-items: center; padding-right: 8px; }
.search { width: 306px; height: 21px; border: 2px solid #dddddd; display: flex; align-items: center; justify-content: space-between; font-size: 14px; padding: 0 9px 0 3px; color: #c4c4c4; }
.search-ic { width: 13px; height: 14px; color: #c9c9c9; }
.avatar { width: 19px; height: 20px; margin-left: 12px; }
.slash { color: #333; margin-left: 8px; font: 14px/20px "Liberation Sans", sans-serif; width: 8px; }
.tick { color: #444; margin-left: 9px; font: 12px/20px "Liberation Sans", sans-serif; width: 16px; }
.tool-ic { width: 18px; height: 18px; flex: none; }
.chat { margin-left: 0; }
.head { margin-left: 11px; height: 20px; }
.help { font: 700 17px/20px "Liberation Sans", sans-serif; color: #8a8a8a; margin-left: 11px; }
.help-tri { margin: 0 0 0 3px; border-top-color: #bbb; }
.shirt { margin-left: 9px; }
.box { margin-left: 10px; }

/* ribbon */
.ribbon { height: 122px; flex: none; display: flex; background: linear-gradient(#fff 45%, #e9ecec); border-bottom: 2px solid #a6a8aa; }
.group { display: flex; flex-direction: column; border-right: 2px solid #dde0e0; margin: 3px 0 0; }
.g-sel { width: 181px; padding-left: 10px; }
.g-common { width: 256px; padding-left: 12px; }
.g-ops { width: 305px; padding-left: 9px; }
.g-user { width: 210px; padding-left: 8px; }
.g-body { display: flex; flex: 1; padding-top: 1px; }
.g-label { height: 24px; line-height: 22px; text-align: center; flex: none; }
.g-sel .g-label { margin-left: -4px; }
.g-common .g-label { margin-left: -7px; }
.g-ops .g-label { margin-left: -4px; }
.g-user .g-label { margin-left: -6px; }
.big { display: flex; flex-direction: column; align-items: center; padding-top: 5px; gap: 6px; white-space: nowrap; flex: none; }
.big-ic { width: 37px; height: 37px; flex: none; }
.big .tri { margin-top: -2px; border-width: 4px; border-top-width: 5px; border-bottom-width: 0; }
.b-sel { width: 48px; }
.b-2d { width: 68px; }
.b-solid { width: 54px; }
.b-orbit { width: 64px; }
.col { display: flex; flex-direction: column; margin-left: 7px; }
.col-a { width: 80px; margin-left: 8px; }
.col-a + .col { margin-left: 0; }
.sm { display: flex; align-items: center; gap: 3px; height: 28.500px; white-space: nowrap; }
.sm .tri { margin-left: 7px; }
.sm-ic { width: 21px; height: 21px; flex: none; }
.user-grid { flex: 1; display: grid; grid-template-columns: 98px auto; grid-auto-rows: 24px; row-gap: 5px; padding-top: 3px; justify-items: start; align-content: start; }
.pill { display: flex; align-items: center; gap: 5px; padding: 0 8px 0 4px; white-space: nowrap; height: 24px; }
.pill.on { background: #c5d9f1; }
.pill-ic { width: 19px; height: 20px; flex: none; }

/* combos */
.combos { height: 34px; flex: none; display: flex; gap: 3px; padding: 4px 3px 2px; background: #c9ccd0; border-bottom: 1px solid #8f9296; }
.combo { width: 122px; height: 27px; background: #fff; display: flex; align-items: center; justify-content: space-between; padding: 0 5px 0 4px; white-space: nowrap; letter-spacing: .15px; }

/* main */
.main { height: 785px; flex: none; display: flex; background: #eceef0; }
.dock-head { height: 15px; flex: none; background: #d5d7db; display: flex; justify-content: flex-end; align-items: center; padding-right: 6px; border-top: 1px solid #eceef0; }
.dock-x { font-size: 10px; line-height: 12px; color: #777; font-weight: 700; }
.nav { width: 260px; flex: none; display: flex; flex-direction: column; background: #fff; overflow: hidden; }
.nav-title { height: 28px; flex: none; background: #f0f0f0; border-bottom: 1px solid #c8cacc; color: #999; font-weight: 500; padding-left: 10px; line-height: 26px; }
.nav-tools { height: 35px; flex: none; background: #eee; border-bottom: 1px solid #c8cacc; display: flex; align-items: center; padding: 0 1px 0 9px; gap: 6px; }
.nav-add { width: 16px; height: 12px; margin-right: auto; }
.nav-btn { width: 30px; height: 27px; border: 1.500px solid #7fb7f0; border-radius: 4px; padding: 3px 4px; background: #f4f8fc; }
.nav-btn svg { width: 100%; height: 100%; }
.tree { position: relative; flex: 1; padding-top: 2px; overflow: hidden; }
.scroll { position: absolute; background: #cccccc; border-radius: 5px; }
.nav-scroll { left: 247px; top: 33px; width: 10px; height: 294px; }
.f, .c { height: 30px; display: flex; align-items: center; white-space: nowrap; }
.f { padding-left: 4px; gap: 7px; }
.f-ic { width: 18px; height: 16px; flex: none; }
.c { margin-left: 50px; width: 175px; padding-left: 4px; gap: 9px; }
.c-ic { width: 19px; height: 19px; flex: none; }
.c.sel { background: linear-gradient(#c5d7ee, #c5d7ee) center / 100% 26px no-repeat; }
.vip { margin-left: -1px; width: 38px; height: 13px; background: #ffd95c; color: #b99a1c; font: 700 10px/13px "Liberation Serif", serif; letter-spacing: .5px; text-align: center; }
.gutter { width: 7px; flex: none; background: #e8e9eb; }
.mid { width: 350px; flex: none; display: flex; flex-direction: column; gap: 5px; }
.panel { display: flex; flex-direction: column; background: #fff; border: 1px solid #cfd1d3; border-top: 0; }
.p-list { height: 256px; flex: none; }
.p-prop { flex: 1; min-height: 0; }
.ptabs { height: 28px; flex: none; display: flex; background: #f0f0f0; border-bottom: 1px solid #cfd1d3; padding-left: 1px; }
.ptab { width: 81px; text-align: center; line-height: 27px; background: #dedfe0; color: #a0a0a0; font-weight: 500; }
.ptab.on { width: 80px; background: #f0f0f0; color: #444; margin-right: 1px; font-weight: 700; }
.ptools { height: 35px; flex: none; display: flex; align-items: center; background: #f0f0f0; border-bottom: 1px solid #cfd1d3; padding: 2px 0 0 8px; color: #555; }
.pt-ic { width: 18px; height: 18px; flex: none; }
.pt-t { margin-left: 5px; }
.pt-tri { margin-left: 8px; }
.i2 { margin-left: 12px; }
.i3 { margin-left: 12px; }
.i4 { margin-left: 10px; }
.pt-more { margin-left: auto; margin-right: 5px; font-size: 9px; color: #444; letter-spacing: -1px; }
.psearch { height: 25px; flex: none; display: flex; align-items: center; justify-content: space-between; border-bottom: 1px solid #cfd1d3; padding: 0 10px 0 3px; color: #aaa; }
.psearch-ic { width: 13px; height: 14px; color: #3f8fd8; }
.plist { position: relative; flex: 1; overflow: hidden; padding-top: 3px; }
.list-scroll { left: 335px; top: 96px; width: 10px; height: 22px; }
.li { height: 30px; display: flex; align-items: center; padding-left: 50px; color: #333; white-space: nowrap; letter-spacing: .15px; }
.li span { padding: 0 4px; }
.li.on { background: linear-gradient(#b0ccee, #b0ccee) 50px 50% / 201px 27px no-repeat; }
.grid { flex: none; display: grid; grid-template-columns: 26px 127px 191px; grid-template-rows: 27px repeat(15, 26.250px); margin-right: 4px; }
.grid > div { border-right: 1px solid #e0e0e0; border-bottom: 2px solid #e2e2e2; white-space: nowrap; overflow: hidden; line-height: 24px; }
.h { background: #f0f0f0; text-align: center; color: #555; }
.n { background: #f0f0f0; text-align: center; color: #555; }
.k { padding-left: 4px; color: #333; }
.k.link { color: #4a6fe8; }
.v { padding-left: 5px; color: #444; letter-spacing: .15px; }
.v.off { background: #ebebeb; color: #aaa; }
.group-k { display: flex; align-items: center; }
.pm { width: 16px; height: 16px; border: 1px solid #999; border-radius: 3px; font: 400 13px/13px "Liberation Sans", sans-serif; text-align: center; margin: -2px 7px 0 0; flex: none; }
.filler { flex: 1; min-height: 0; }
.filler-n { width: 26px; height: 100%; background: #f0f0f0; }
.splitter { position: relative; width: 5px; flex: none; background: #e8e9eb; }
.split-handle { position: absolute; left: 0; top: 331px; width: 5px; height: 127px; background: #4a5058; display: flex; align-items: center; }
.split-handle span { border: 3px solid transparent; border-right: 3px solid #aab; border-left: 0; }

/* scene */
.view { position: relative; flex: 1; overflow: hidden; }
.scene { width: 100%; height: 100%; }
.thin line, line.thin { vector-effect: non-scaling-stroke; stroke-width: 1; }
.faint line { stroke: #575757; }
line.red { stroke: #a80000; stroke-width: 1.500; }
.yellow { fill: none; stroke: #f4f000; }
.yellow polyline, .yellow line { vector-effect: non-scaling-stroke; stroke-width: 2; }
.rings circle { fill: none; stroke: #9c9c9c; stroke-width: 1.300; }
.dim { fill: #fff; font: 22px "Liberation Sans", sans-serif; }
.handles rect { fill: #00ee00; }
.ax-z, .ax-x, .ax-y { font: 18px "Liberation Sans", sans-serif; }
.ax-z { fill: #0000ff; }
.ax-x { fill: #ee0000; }
.ax-y { fill: #00dd66; }
.vbar { position: absolute; right: 0; top: 1px; width: 41px; height: 283px; background: #93979c; border-left: 1px solid #dfe0e2; display: flex; flex-direction: column; align-items: center; padding: 14px 0 0 1px; }
.vi { width: 30px; height: 28px; flex: none; margin-bottom: 8px; }
.v1 { height: 26px; margin-bottom: 10px; }
.v-tri { margin: 1px 0 7px; border-width: 4px; border-top: 5px solid #3d454f; border-bottom: 0; }
.v-sep { width: 29px; margin: 0 0 5px; border: 0; border-top: 1px solid #6f7276; }

/* status bar */
.status { position: relative; height: 38px; flex: none; display: flex; align-items: center; background: #dcdcde; white-space: nowrap; color: #444; border-bottom: 1px solid #eee; }
.st { flex: none; }
.coords { width: 330px; padding-left: 2px; letter-spacing: .95px; }
.s-h { width: 104px; }
.s-e { width: 166px; letter-spacing: .2px; }
.s-n { width: 129px; }
.s-c { width: 130px; }
.sbtns { display: flex; gap: 3px; flex: none; }
.sb { height: 31px; display: flex; align-items: center; justify-content: center; gap: 3px; background: #d3d3d5; border: 2px solid #b4b5b7; flex: none; }
.sb svg { width: 20px; height: 20px; flex: none; }
.sb svg.b-rect { width: 20px; height: 24px; }
.sb.cur { background: #fff; border-color: #7fb7f0; }
.sb.dis { background: #d8d8da; margin-left: 4px; }
.after-x { margin-left: 5px; }
.w31 { width: 31px; }
.w45 { width: 45px; }
.w91 { width: 91px; margin-left: 1px; }
.w76 { width: 76px; }
.txt { color: #555; }
.msg { margin-left: 8px; }
.fps { margin-left: auto; padding-right: 14px; }
.ime { position: absolute; left: 0; top: 11px; width: 62px; height: 25px; background: rgba(240, 240, 240, .5); display: flex; align-items: center; padding-left: 12px; }
.ime svg { width: 22px; height: 20px; }
.ime-tri { margin-left: 18px; border-top-color: #444; border-width: 5px; border-bottom-width: 0; }

/* desktop strip */
.desk { position: relative; flex: 1; display: flex; overflow: hidden; }
.desk span { flex: none; }
.d1 { width: 60px; background: #f5e9d5; }
.d2 { width: 428px; background: #fff; border-left: 1px solid #bbb; }
.d3 { width: 186px; background: #d9e8ef; }
.d4 { width: 62px; background: #eef5f7; }
.d5 { width: 63px; }
.d6 { width: 61px; background: #f5b27d; }
.d7 { flex: 1 !important; background: linear-gradient(90deg, #dce9ee 0 390px, #f3e8d5 480px); }
.desk .d-num { position: absolute; left: 1745px; top: 5px; font-size: 13px; line-height: 14px; color: #333; }
```
